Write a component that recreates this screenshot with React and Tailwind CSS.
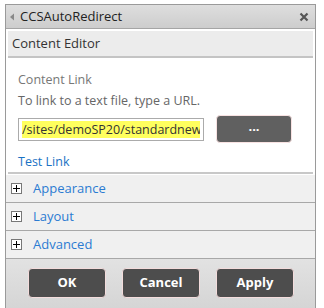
import React from 'react';

const Section = ({ label }) => (
  <div className="flex h-[28px] items-center border-b border-[#a8a8a8] bg-[#f0f0f0] pl-[5px]">
    <span className="flex h-[11px] w-[11px] items-center justify-center border border-[#777] bg-white">
      <svg width="7" height="7" viewBox="0 0 7 7">
        <path d="M0 3.5h7M3.5 0v7" stroke="#000" strokeWidth="1" />
      </svg>
    </span>
    <span className="ml-[11px] text-[13px] text-[#2b7bd2]">{label}</span>
  </div>
);

const FooterButton = ({ children }) => (
  <button className="h-[30px] w-[78px] rounded-[4px] border border-[#f3dcdc] bg-[#4d4d4d] text-[13px] font-bold text-white">
    {children}
  </button>
);

export default function App() {
  return (
    <div
      className="h-[308px] w-[324px] overflow-hidden bg-white pl-[5px] pt-[4px]"
      style={{ fontFamily: '"Open Sans", "Noto Sans", sans-serif' }}
    >
      <div className="w-[311px] border-x border-t border-[#9a9a9a]">
        {/* title bar */}
        <div className="flex h-[24px] items-center border-b border-[#a5a5a5] bg-gradient-to-b from-[#dedede] to-[#cdcdcd] pl-[3px] pr-[6px]">
          <svg width="6" height="8" viewBox="0 0 6 8" className="mr-[5px]">
            <path d="M5 0.5L1 4l4 3.5z" fill="#888" />
          </svg>
          <span className="text-[13px] text-[#222]">CCSAutoRedirect</span>
          <svg width="10" height="10" viewBox="0 0 10 10" className="ml-auto">
            <path d="M1.5 1.5l7 7M8.5 1.5l-7 7" stroke="#555" strokeWidth="2.2" />
          </svg>
        </div>

        <div className="bg-white px-[2px] pt-[2px]">
          <div className="flex h-[27px] items-center border-b-2 border-[#c4c4c4] bg-[#ececec] pl-[4px] text-[13px] text-[#333]">
            Content Editor
          </div>

          <div className="pl-[10px] pr-[2px] pt-[12px] text-[12.5px]">
            <div className="leading-[19px] text-[#777]">Content Link</div>
            <div className="mt-[2px] leading-[19px] text-[#666]">
              To link to a text file, type a URL.
            </div>
            <div className="mt-[5px] flex items-center">
              <div className="flex h-[23px] w-[186px] items-center overflow-hidden border border-[#ababab] bg-white px-[3px]">
                <div className="h-[17px] w-full overflow-hidden whitespace-nowrap bg-[#ffff5e] leading-[17px] text-[#333]">
                  /sites/demoSP20/standardnew
                </div>
              </div>
              <button className="ml-[12px] h-[28px] w-[76px] rounded-[4px] border border-[#f8e2e2] bg-[#606060] pb-[6px] text-[13px] font-bold leading-none text-white">
                ...
              </button>
            </div>
            <div className="mt-[9px] leading-[19px] text-[#1a72c4]">Test Link</div>
          </div>

          <div className="mb-[1px] mt-[1px] h-[2px] bg-[#c8c8c8]" />
        </div>

        <Section label="Appearance" />
        <Section label="Layout" />
        <Section label="Advanced" />

        <div className="flex h-[60px] gap-[16px] bg-gradient-to-b from-[#e2e2e2] to-[#d2d2d2] pl-[22px] pt-[9px]">
          <FooterButton>OK</FooterButton>
          <FooterButton>Cancel</FooterButton>
          <FooterButton>Apply</FooterButton>
        </div>
      </div>
    </div>
  );
}
